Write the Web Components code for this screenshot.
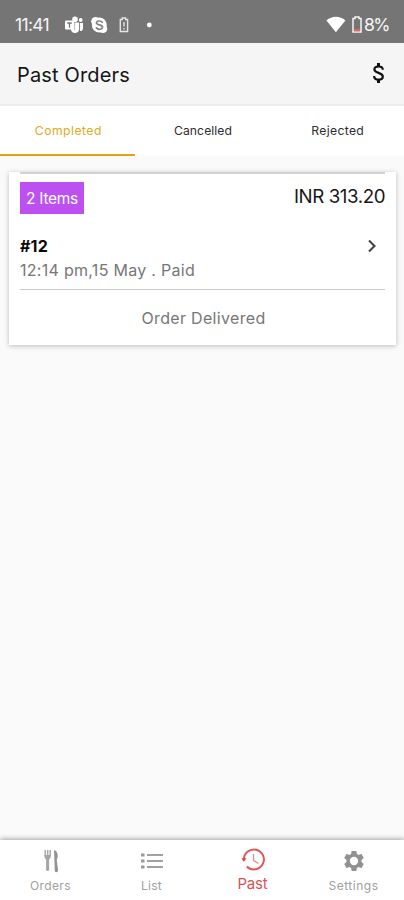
<!DOCTYPE html>
<html lang="en"><head><meta charset="utf-8"><title>Past Orders</title>
<style>html,body{margin:0;height:100%;background:#fafafa;font-family:Inter,"Open Sans",sans-serif}</style></head>
<body><orders-app></orders-app>
<script>
function define(name, html, after) {
  customElements.define(name, class extends HTMLElement {
    connectedCallback() {
      if (!this.shadowRoot) this.attachShadow({mode:'open'}).innerHTML = html;
      if (after) after(this, this.shadowRoot);
    }
  });
}
/* A single line of text tracked to fill the given width. */
define('fit-text', `<style>:host{display:block;white-space:nowrap;line-height:1.25}span{display:inline-block}</style><span></span>`, (h, r) => {
  const s = r.querySelector('span'), t = h.getAttribute('text'), w = +h.getAttribute('w');
  s.textContent = t;
  const n = s.getBoundingClientRect().width;
  s.style.letterSpacing = ((w - n) / t.length) + 'px';
  h.style.width = w + 'px';
});
define('status-bar', `<style>
:host{display:flex;align-items:center;height:43px;padding:6px 15px 0;box-sizing:border-box;background:#757575;color:#f5f5f5;font-size:17.5px}
svg{display:block;flex:none}.sp{flex:1}</style>
<fit-text text="11:41" w="34"></fit-text>
<svg style="margin-left:15px" width="20" height="18" viewBox="0 0 20 18"><g fill="#fff"><circle cx="11" cy="3.2" r="2.8"/><circle cx="16.7" cy="4" r="1.9"/><path d="M7 6.5h8.2V13a4.2 4.2 0 0 1-8.2 1z"/><path d="M16 7h3v5.2a3 3 0 0 1-3 2.8z"/><rect x="1" y="4.5" width="9" height="9" rx="1"/></g><path d="M3.2 7h4.6M5.5 7v4.7" stroke="#777" stroke-width="1.3"/><path d="M10.6 6v8M15.6 7v7" stroke="#888" stroke-width=".6"/></svg>
<svg style="margin-left:6px" width="19" height="18" viewBox="0 0 19 18"><circle cx="9.3" cy="9" r="7.5" fill="#fff"/><circle cx="5.5" cy="5.2" r="4.3" fill="#fff"/><circle cx="13" cy="12.8" r="4.3" fill="#fff"/><path d="M12.3 6.3C11.3 4.5 6.5 4.5 6.5 6.9s6 1.6 6 4.2-4.8 2.9-6.1.7" fill="none" stroke="#858585" stroke-width="1.7" stroke-linecap="round"/></svg>
<svg style="margin-left:9px" width="12" height="16" viewBox="0 0 12 16"><path d="M4.2 2.5V1h3.4v1.5h2v12H2.3v-12z" fill="none" stroke="#e5e5e5" stroke-width="1.4"/><path d="M6 5v4.500M6 11v1.600" stroke="#ddd" stroke-width="1.5"/></svg>
<svg style="margin-left:16px" width="6" height="6"><circle cx="3.3" cy="3" r="2.4" fill="#fff"/></svg><div class="sp"></div>
<svg width="20" height="17" viewBox="0 0 20 17"><path d="M.4 4.600C6-.4 14-.4 19.400 4.600L9.900 16.300z" fill="#fff"/></svg>
<svg style="margin:0 1px 0 5px" width="12" height="17" viewBox="0 0 12 17"><path d="M4 2.500V1h4v1.500h2V16H2V2.500z" fill="none" stroke="#f5f5f5" stroke-width="1.5"/><path d="M3 14.200h6" stroke="#df6860" stroke-width="2.2"/></svg>
<fit-text text="8%" w="25"></fit-text>`);
define('title-bar', `<style>:host{display:flex;align-items:center;justify-content:space-between;box-sizing:border-box;height:63px;padding:3px 19px 0 17px;background:#f5f5f5;border-bottom:2px solid #ededed;font-size:20px;color:#161616}svg{display:block;margin-top:-4px}</style>
<fit-text text="Past Orders" w="113"></fit-text>
<svg width="13" height="22" viewBox="0 0 13 22"><path d="M10.800 7.800C10.800 5.500 8.800 4.500 6.500 4.500 4 4.500 2.400 5.700 2.400 7.500c0 4.200 8.400 2.600 8.400 7 0 2-1.900 3.200-4.300 3.200-2.500 0-4.400-1.300-4.400-3.600" fill="none" stroke="#111" stroke-width="2.2"/><path d="M6.500 1v3.500M6.500 17.500V21" stroke="#111" stroke-width="3"/></svg>`);
define('order-tab', `<style>:host{flex:1;display:flex;justify-content:center;box-sizing:border-box;height:50px;padding:17px 0 0 2px;font-size:12.200px;color:#2e2e2e;border-bottom:2px solid transparent}:host([active]){color:#deaa20;border-color:#dfa414}</style><slot></slot>`);
define('order-tabs', `<style>:host{display:flex;background:#fff;height:50px}</style>
<order-tab active><fit-text text="Completed" w="67"></fit-text></order-tab>
<order-tab><fit-text text="Cancelled" w="58"></fit-text></order-tab>
<order-tab><fit-text text="Rejected" w="53"></fit-text></order-tab>`);
define('order-card', `<style>
:host{display:block;box-sizing:border-box;height:173px;margin:16px 8px 0 9px;padding:0 11px;background:#fff;box-shadow:0 1px 5px rgba(0,0,0,.25);color:#777;font-size:16px}
.top{display:flex;justify-content:space-between;border-top:2px solid #d2d2d2;height:62px;box-sizing:border-box;padding-top:8px}
.badge{display:flex;align-items:center;justify-content:center;width:64px;height:32px;padding-top:1px;box-sizing:border-box;background:#bc50f0;color:#fff;font-size:15.5px}
.price{font-size:18.700px;color:#171717;margin:3px 0 0}
.row{display:flex;justify-content:space-between;height:55px;border-bottom:1px solid #c9c9c9}
.id{font-weight:700;color:#080808;margin-top:2px}.when{margin-top:4px}
svg{margin:5px 7px 0 0}.state{display:flex;justify-content:center;padding:18px 0 0 2px}</style>
<div class="top"><div class="badge"><fit-text text="2 Items" w="52"></fit-text></div><fit-text class="price" text="INR 313.20" w="91"></fit-text></div>
<div class="row"><div><fit-text class="id" text="#12" w="28"></fit-text><fit-text class="when" text="12:14 pm,15 May . Paid" w="175"></fit-text></div>
<svg width="12" height="14" viewBox="0 0 12 14"><path d="M3 1.5 8.5 7 3 12.5" fill="none" stroke="#444" stroke-width="2.1"/></svg></div>
<div class="state"><fit-text text="Order Delivered" w="124"></fit-text></div>`);
define('nav-item', `<style>:host{flex:1;display:flex;flex-direction:column;align-items:center;color:#a0a0a0;font-size:12px;padding-top:8px}:host([active]){color:#db5353;font-size:15px}.i{display:flex;height:26px;margin-bottom:4px;align-items:center}:host([active]) .i{height:23px}</style><div class="i"><slot name="icon"></slot></div><slot></slot>`);
define('nav-bar', `<style>:host{display:flex;height:60px;background:#fff;box-shadow:0 -1px 5px rgba(0,0,0,.36)}svg{display:block}</style>
<nav-item><svg slot="icon" width="18" height="26" viewBox="0 0 18 26"><path d="M3.2 2v6.3M5.7 2v6.3M8.2 2v6.3" stroke="#aaa" stroke-width="1.5"/><path d="M2.5 7h6.4c0 3-1.200 4-1.800 4.500V22a1.600 1.600 0 0 1-3 0V11.500C3.300 11 2.500 10 2.500 7z" fill="#a5a5a5"/><path d="M12 2c3 1 4 4 3.700 7l-1 3 1.300 10a1.600 1.600 0 0 1-3.200 1z" fill="#929292"/></svg><fit-text text="Orders" w="41"></fit-text></nav-item>
<nav-item><svg slot="icon" width="24" height="18" viewBox="0 0 24 18"><path d="M1 3h3.500M1 9h3.500M1 15h3.500" stroke="#999" stroke-width="3.200"/><path d="M7 3h16M7 9h16M7 15h16" stroke="#a0a0a0" stroke-width="2"/></svg><fit-text text="List" w="21"></fit-text></nav-item>
<nav-item active><svg slot="icon" width="26" height="24" viewBox="0 0 26 24" fill="none"><path d="M3.900 12A10 10 0 1 1 6.800 18.500" stroke="#e25953" stroke-width="2"/><path d="M1.500 10.300h5l-2.700 3.700z" fill="#e04b46"/><path d="M13.500 6v6.500l5 3" stroke="#dc8d8a" stroke-width="1.300"/></svg><fit-text text="Past" w="30"></fit-text></nav-item>
<nav-item><svg slot="icon" width="24" height="24" viewBox="0 0 24 24"><path fill="#919191" d="M19.430 12.980c.04-.32.070-.64.070-.98s-.03-.66-.070-.98l2.110-1.650c.19-.15.240-.42.120-.64l-2-3.460c-.12-.22-.39-.3-.61-.22l-2.490 1c-.52-.4-1.080-.73-1.690-.98l-.38-2.650C14.460 2.180 14.250 2 14 2h-4c-.25 0-.46.18-.49.42l-.38 2.650c-.61.250-1.170.590-1.690.980l-2.490-1c-.23-.09-.49 0-.61.220l-2 3.460c-.13.220-.07.490.120.640l2.110 1.650c-.04.320-.07.650-.07.980s.03.660.070.980l-2.110 1.650c-.19.150-.24.420-.12.640l2 3.460c.12.220.39.300.61.220l2.490-1c.52.400 1.080.730 1.690.980l.38 2.650c.03.240.24.420.49.420h4c.25 0 .46-.18.490-.42l.38-2.650c.61-.25 1.170-.59 1.690-.98l2.490 1c.23.090.49 0 .61-.22l2-3.460c.12-.22.07-.49-.12-.64zM12 16.200a4.200 4.200 0 1 1 0-8.400 4.200 4.200 0 0 1 0 8.400z"/></svg><fit-text text="Settings" w="50"></fit-text></nav-item>`);
define('orders-app', `<style>:host{display:flex;flex-direction:column;height:900px;overflow:hidden}main{flex:1}</style><status-bar></status-bar><title-bar></title-bar><order-tabs></order-tabs><main><order-card></order-card></main><nav-bar></nav-bar>`);
</script></body></html>
